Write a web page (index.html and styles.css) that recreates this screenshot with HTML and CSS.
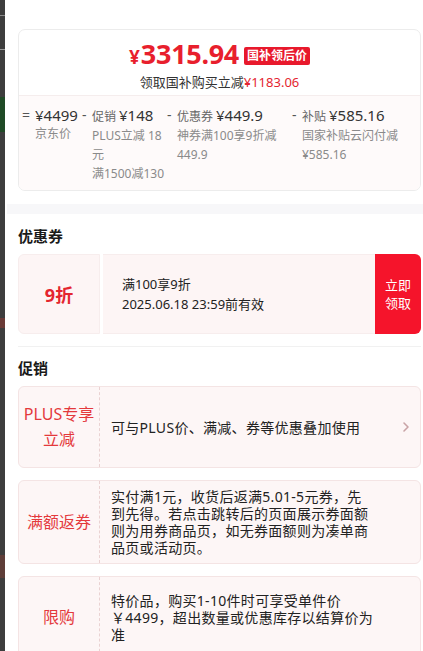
FILE: index.html
```html
<!DOCTYPE html>
<html lang="zh-CN">
<head>
<meta charset="utf-8">
<title>价格详情</title>
<link rel="stylesheet" href="styles.css">
</head>
<body>
<div class="page">
  <div class="edge"></div>
  <div class="panel">
    <div class="price-card">
      <div class="price-head">
        <div class="price-line"><span class="yen">¥</span><span class="num">3315.94</span><span class="badge">国补领后价</span></div>
        <div class="price-sub">领取国补购买立减<span class="red">¥1183.06</span></div>
      </div>
      <div class="breakdown">
        <div class="bd-col c1">
          <span class="sign">=</span>
          <div class="bd-body">
            <div class="bd-amt">¥4499</div>
            <div class="bd-desc">京东价</div>
          </div>
        </div>
        <div class="bd-col c2">
          <span class="sign">-</span>
          <div class="bd-body">
            <div class="bd-amt"><span class="bd-lab">促销</span>¥148</div>
            <div class="bd-desc">PLUS立减 18元</div>
            <div class="bd-desc">满1500减130</div>
          </div>
        </div>
        <div class="bd-col c3">
          <span class="sign">-</span>
          <div class="bd-body">
            <div class="bd-amt"><span class="bd-lab">优惠券</span>¥449.9</div>
            <div class="bd-desc">神券满100享9折减 449.9</div>
          </div>
        </div>
        <div class="bd-col c4">
          <span class="sign">-</span>
          <div class="bd-body">
            <div class="bd-amt"><span class="bd-lab">补贴</span>¥585.16</div>
            <div class="bd-desc">国家补贴云闪付减 ¥585.16</div>
          </div>
        </div>
      </div>
    </div>

    <div class="band"></div>

    <section class="sec coupon-sec">
      <h2 class="sec-title">优惠券</h2>
      <div class="coupon">
        <div class="cp-left">9折</div>
        <div class="cp-mid">
          <div>满100享9折</div>
          <div>2025.06.18 23:59前有效</div>
        </div>
        <div class="cp-btn">立即<br>领取</div>
      </div>
    </section>

    <section class="sec promo-sec">
      <h2 class="sec-title">促销</h2>
      <div class="promo-list">
        <div class="promo">
          <div class="pr-label">PLUS专享<br>立减</div>
          <div class="pr-text">可与PLUS价、满减、券等优惠叠加使用</div>
          <span class="pr-arrow"><svg width="8" height="12" viewBox="0 0 8 12"><path d="M2 2 L6 6 L2 10" fill="none" stroke="#c9a3a6" stroke-width="1.6" stroke-linecap="round" stroke-linejoin="round"/></svg></span>
        </div>
        <div class="promo">
          <div class="pr-label">满额返券</div>
          <div class="pr-text">实付满1元，收货后返满5.01-5元券，先到先得。若点击跳转后的页面展示券面额则为用券商品页，如无券面额则为凑单商品页或活动页。</div>
        </div>
        <div class="promo">
          <div class="pr-label">限购</div>
          <div class="pr-text">特价品，购买1-10件时可享受单件价￥4499，超出数量或优惠库存以结算价为准</div>
        </div>
      </div>
    </section>
  </div>
</div>
</body>
</html>
```
FILE: styles.css
```css
* { box-sizing: border-box; }
html, body { margin: 0; padding: 0; }
body {
  font-family: "Noto Sans", "Noto Sans CJK SC", sans-serif;
  color: #333;
  background: #fff;
}
.page {
  display: flex;
  min-height: 651px;
}
.edge {
  width: 5px;
  flex: none;
  background:
    linear-gradient(to bottom,
      #3d3d3d 0, #3d3d3d 15px, #8a8a8a 15px, #8a8a8a 16px, #3d3d3d 16px,
      #3d3d3d 49px, #9a9a9a 49px, #9a9a9a 50px, #3d3d3d 50px,
      #3d3d3d 97px, #1f4a26 97px, #1f4a26 132px, #3d3d3d 132px,
      #3d3d3d 318px, #6a3a36 318px, #6a3a36 328px, #3d3d3d 328px,
      #3d3d3d 555px, #5e3d38 555px, #5e3d38 578px, #3d3d3d 578px);
}
.panel {
  flex: 1;
  padding: 29px 2px 0 13px;
  overflow: hidden;
}

/* price card */
.price-card {
  border: 1px solid #ececec;
  border-radius: 7px;
  overflow: hidden;
}
.price-head {
  padding: 8px 0 4px;
  text-align: center;
}
.price-line {
  display: flex;
  justify-content: center;
  align-items: center;
  height: 32px;
  line-height: 32px;
  color: #e81f2d;
}
.yen {
  font-size: 19px;
  font-weight: 700;
  line-height: 24px;
  margin-top: 5px;
  margin-right: 1px;
}
.num {
  font-size: 27px;
  font-weight: 700;
  line-height: 32px;
  letter-spacing: -0.3px;
}
.badge {
  margin-left: 5px;
  margin-top: 3px;
  background: #e8192c;
  color: #fff;
  font-size: 12px;
  font-weight: 700;
  line-height: 18px;
  padding: 0 3px;
  border-radius: 2px;
}
.price-sub {
  margin-top: 3px;
  font-size: 13px;
  line-height: 18px;
  color: #333;
}
.red { color: #e4252f; }

.breakdown {
  display: flex;
  border-top: 1px solid #f5eded;
  background: #fefafa;
  padding: 9px 3px 7px 3px;
}
.bd-col { display: flex; }
.c1 { width: 60px; }
.c2 { width: 85px; }
.c3 { width: 125px; }
.c4 { flex: 1; }
.sign {
  width: 10px;
  flex: none;
  font-size: 14px;
  line-height: 20px;
  color: #555;
}
.c1 .sign { width: 13px; }
.bd-body { flex: 1; min-width: 0; }
.bd-amt {
  font-size: 15px;
  line-height: 20px;
  color: #333;
  white-space: nowrap;
}
.bd-lab {
  font-size: 12px;
  color: #666;
  margin-right: 3px;
}
.bd-desc {
  font-size: 12px;
  line-height: 19px;
  color: #8a8a8a;
}
.bd-amt + .bd-desc { margin-top: -1px; }

.band {
  height: 10px;
  margin: 13px -2px 0 -11px;
  background: #f7f7f9;
}

/* sections */
.sec-title {
  margin: 0 0 8px;
  padding-top: 12px;
  font-size: 15px;
  line-height: 20px;
  font-weight: 700;
  color: #1a1a1a;
}
.coupon-sec {
  padding-bottom: 12px;
  border-bottom: 1px solid #f1f1f1;
}
.promo-sec .sec-title {
  padding-top: 11px;
  margin-bottom: 8px;
}

.coupon {
  display: flex;
  height: 80px;
}
.cp-left {
  width: 82px;
  flex: none;
  display: flex;
  align-items: center;
  justify-content: center;
  background: #fdf5f5;
  border: 1px solid #f7eded;
  border-radius: 6px 0 0 6px;
  color: #e4252f;
  font-size: 18px;
  font-weight: 700;
}
.cp-mid {
  flex: 1;
  margin-left: 3px;
  display: flex;
  flex-direction: column;
  justify-content: center;
  padding-left: 19px;
  background: #fdf5f5;
  border-top: 1px solid #f7eded;
  border-bottom: 1px solid #f7eded;
  font-size: 13px;
  line-height: 20px;
  color: #222;
}
.cp-btn {
  width: 46px;
  flex: none;
  display: flex;
  align-items: center;
  justify-content: center;
  text-align: center;
  background: #f5142b;
  border-radius: 0 6px 6px 0;
  color: #fff;
  font-size: 13px;
  line-height: 18px;
}

.promo-list {
  display: flex;
  flex-direction: column;
  gap: 12px;
}
.promo {
  display: flex;
  align-items: stretch;
  min-height: 82px;
  background: #fdf6f6;
  border: 1px solid #f4e4e4;
  border-radius: 6px;
  position: relative;
}
.pr-label {
  width: 81px;
  flex: none;
  display: flex;
  align-items: center;
  justify-content: center;
  text-align: center;
  border-right: 1px dashed #ead2d2;
  color: #e4393c;
  font-size: 16px;
  line-height: 25px;
}
.pr-text {
  flex: 1;
  align-self: center;
  padding: 7px 46px 7px 11px;
  font-size: 14px;
  line-height: 17px;
  letter-spacing: 0.3px;
  color: #222;
}
.pr-arrow {
  position: absolute;
  right: 10px;
  top: 50%;
  margin-top: -6px;
  display: flex;
}
```
